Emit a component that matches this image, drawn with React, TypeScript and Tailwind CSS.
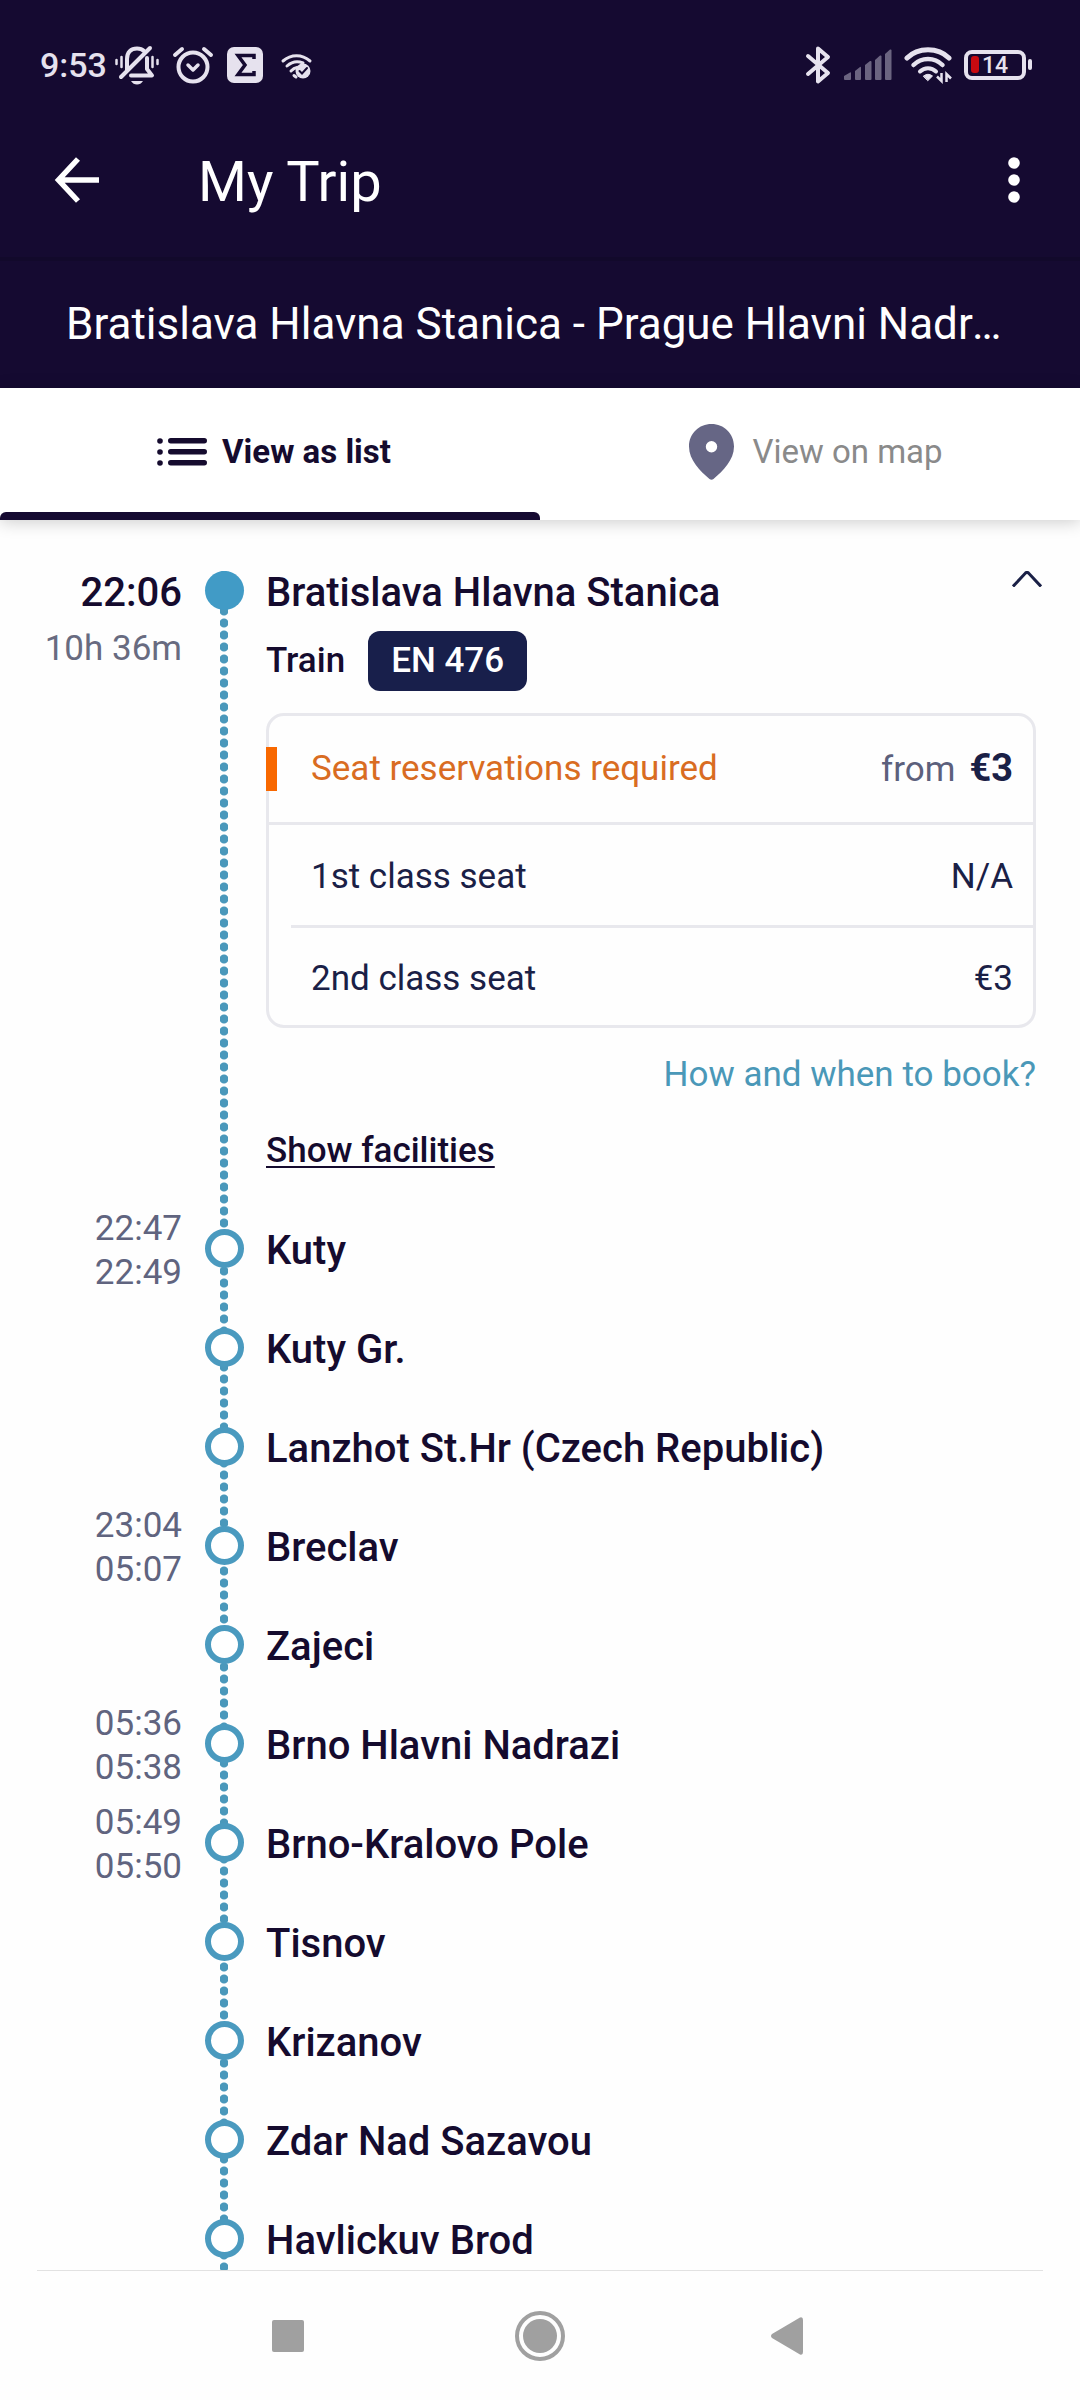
import clsx from "clsx";

type Stop = {
  name: string;
  arrival?: string;
  departure?: string;
};

const stops: Stop[] = [
  { name: "Kuty", arrival: "22:47", departure: "22:49" },
  { name: "Kuty Gr." },
  { name: "Lanzhot St.Hr (Czech Republic)" },
  { name: "Breclav", arrival: "23:04", departure: "05:07" },
  { name: "Zajeci" },
  { name: "Brno Hlavni Nadrazi", arrival: "05:36", departure: "05:38" },
  { name: "Brno-Kralovo Pole", arrival: "05:49", departure: "05:50" },
  { name: "Tisnov" },
  { name: "Krizanov" },
  { name: "Zdar Nad Sazavou" },
  { name: "Havlickuv Brod" },
];

const seats = [
  { label: "1st class seat", price: "N/A" },
  { label: "2nd class seat", price: "€3" },
];

const StatusBar = () => (
  <div className="flex h-[103px] items-end justify-between pr-[46px] pb-[18px] pl-10 text-[#e6e2ee]">
    <div className="flex h-10 items-center">
      <span className="text-[34px] leading-10 font-medium">9:53</span>
      <svg className="ml-2 h-10 w-11" viewBox="0 0 44 40" fill="none" stroke="currentColor" strokeLinecap="round">
        <path d="M12 25V14C12 7 16 3.500 22 3.500C25 3.500 27.500 4.500 29 6" strokeWidth="4" />
        <path d="M32 13V24L37 30.500H16" strokeWidth="4" strokeLinejoin="round" />
        <path d="M6 32L35 3" strokeWidth="4" />
        <path d="M16 36H28C26.500 38.500 24.500 39.500 22 39.500S17.500 38.500 16 36Z" fill="currentColor" stroke="none" />
        <path d="M1.500 15V19M6.500 12V22M37.500 12V22M42.500 15V19" strokeWidth="2.500" />
      </svg>
      <svg className="ml-3 h-10 w-11" viewBox="0 0 44 40" fill="none" stroke="currentColor" strokeLinecap="round">
        <circle cx="22" cy="22" r="14.500" strokeWidth="4" />
        <path d="M4 10L11 4M40 10L33 4" strokeWidth="4" />
        <path d="M17 20L22 25L27 20" strokeWidth="3.500" strokeLinejoin="round" />
      </svg>
      <svg className="ml-3 h-10 w-9" viewBox="0 0 36 40">
        <rect x="0" y="2" width="36" height="36" rx="7" fill="currentColor" />
        <path d="M27 14V10.500H11L18 20L11 29.500H27V26" fill="none" stroke="#150a31" strokeWidth="3.500" />
      </svg>
      <svg className="ml-4 h-10 w-9" viewBox="0 0 36 40" fill="none" stroke="currentColor" strokeLinecap="round">
        <path d="M4 16C12 9 23 9 31 16" strokeWidth="3" />
        <path d="M8 21C13 16.500 19 16 24 18" strokeWidth="3" />
        <path d="M12 26C14 24 15.500 23 18 22.500" strokeWidth="3" />
        <path d="M15 30.500L17 32" strokeWidth="3" />
        <circle cx="24" cy="26" r="7.500" fill="currentColor" stroke="none" />
        <path d="M20.500 26L23 28.500L28 23" stroke="#150a31" strokeWidth="2" />
      </svg>
    </div>
    <div className="flex h-10 items-center">
      <svg className="h-10 w-7" viewBox="0 0 28 40" fill="none" stroke="currentColor" strokeWidth="4" strokeLinecap="round" strokeLinejoin="round">
        <path d="M4 11L24 28L14 36.500V3.500L24 12L4 29" />
      </svg>
      <svg className="ml-3 h-10 w-12 text-[#6b6480]" viewBox="0 0 48 40" fill="currentColor">
        <path d="M0 31L6 27.500Q7 27 7 28V34Q7 35 6 35H1Q0 35 0 34Z" />
        <path d="M11 26L16 22Q17 21.500 17 22.500V34Q17 35 16 35H12Q11 35 11 34Z" />
        <path d="M21 20L26 16Q27.500 15.500 27.500 17V34Q27.500 35 26.500 35H22Q21 35 21 34Z" />
        <path d="M31 15L36 10.500Q37.500 10 37.500 11.500V34Q37.500 35 36.500 35H32Q31 35 31 34Z" />
        <path d="M41 9L46 4.500Q47.500 4 47.500 5.500V34Q47.500 35 46.500 35H42Q41 35 41 34Z" />
      </svg>
      <svg className="ml-3 h-10 w-12" viewBox="0 0 48 40" fill="none" stroke="currentColor" strokeLinecap="round">
        <path d="M3 13C14 2 34 2 45 13" strokeWidth="5" />
        <path d="M9.500 20C17.500 12 30.500 12 38.500 20" strokeWidth="4.500" />
        <path d="M16 26.500C20.500 22 27.500 22 32 26.500" strokeWidth="4" />
        <path d="M19.500 31Q24 27.500 28.500 31L24 35.500Z" fill="currentColor" strokeWidth="1" strokeLinejoin="round" />
        <path d="M37.500 28V36L33 31.500M42.500 37V29L47 33.500" strokeWidth="2.500" strokeLinecap="butt" />
      </svg>
      <svg className="ml-3 h-10 w-[70px]" viewBox="0 0 70 40" fontFamily="Roboto, sans-serif">
        <rect x="2" y="7" width="58" height="26" rx="6" fill="none" stroke="currentColor" strokeWidth="4" />
        <rect x="7" y="11" width="8" height="17" rx="3" fill="#c80a10" />
        <rect x="64" y="14" width="4" height="11" rx="2" fill="currentColor" />
        <text x="18" y="27.500" fontSize="23" fontWeight="500" fill="currentColor">14</text>
      </svg>
    </div>
  </div>
);

const Header = () => (
  <header className="shrink-0 bg-[#150a31] text-white">
    <StatusBar />
    <div className="flex h-[154px] items-center pr-11 pl-[54px]">
      <button type="button" aria-label="Back">
        <svg className="h-[46px] w-[46px]" viewBox="0 0 46 46" fill="none" stroke="currentColor" strokeWidth="5.500">
          <path d="M45 23H5M24 2L4.500 23L24 44" />
        </svg>
      </button>
      <h1 className="ml-[98px] pt-1 text-[56px] leading-[64px]">My Trip</h1>
      <button type="button" aria-label="More options" className="ml-auto px-4">
        <svg className="h-[46px] w-3" viewBox="0 0 12 46" fill="currentColor">
          <circle cx="6" cy="6" r="5.800" />
          <circle cx="6" cy="23" r="5.800" />
          <circle cx="6" cy="40" r="5.800" />
        </svg>
      </button>
    </div>
    <h2 className="h-[131px] truncate border-t-4 border-[#12092b] px-[66px] text-[44px] leading-[126px]">
      Bratislava Hlavna Stanica - Prague Hlavni Nadrazi
    </h2>
  </header>
);

const Tabs = () => (
  <div
    role="tablist"
    className="relative grid shrink-0 grid-cols-2 bg-white text-[33px] shadow-[0_2px_16px_rgba(0,0,0,0.2)]"
  >
    <button
      type="button"
      role="tab"
      aria-selected="true"
      className="flex flex-col items-center font-bold text-[#150b2e]"
    >
      <span className="flex h-[124px] items-center gap-[15px] pt-1 pl-2">
        <svg className="h-7 w-[50px]" viewBox="0 0 50 28" fill="currentColor">
          <circle cx="3" cy="3" r="2.800" />
          <circle cx="3" cy="14" r="2.800" />
          <circle cx="3" cy="25" r="2.800" />
          <rect x="11" y="0" width="39" height="5.500" rx="2.750" />
          <rect x="11" y="11" width="39" height="5.500" rx="2.750" />
          <rect x="11" y="22" width="39" height="5.500" rx="2.750" />
        </svg>
        View as list
      </span>
      <span className="h-2 w-full rounded-t-md bg-[#150a31]" />
    </button>
    <button
      type="button"
      role="tab"
      aria-selected="false"
      className="flex h-[124px] items-center justify-center gap-[18px] pt-1 pl-3 text-[#8a8a8a]"
    >
      <svg className="h-14 w-[45px] text-[#666685]" viewBox="0 0 45 56" fill="currentColor" fillRule="evenodd">
        <path d="M22.500 0C10 0 0 9.500 0 22.500C0 36 11 47 20.500 55Q22.500 56.500 24.500 55C34 47 45 36 45 22.500C45 9.500 35 0 22.500 0ZM22.500 17A5.700 5.700 0 1 1 22.500 28.400A5.700 5.700 0 1 1 22.500 17Z" />
      </svg>
      View on map
    </button>
  </div>
);

const SeatCard = () => (
  <dl className="mt-[22px] rounded-[18px] border-3 border-[#e8e8ed] text-[#1a2046]">
    <div className="flex h-[109px] items-center justify-between border-b-3 border-[#e8e8ed] pr-5">
      <dt className="flex items-center text-[#d96c22]">
        <span className="-ml-[3px] h-11 w-[11px] bg-[#f86800]" />
        <span className="ml-[34px]">Seat reservations required</span>
      </dt>
      <dd className="flex items-baseline gap-3.5 text-[#5c607c]">
        from
        <span className="text-[38px] font-bold text-[#1a2046]">€3</span>
      </dd>
    </div>
    {seats.map((seat, index) => (
      <div
        key={seat.label}
        className={clsx(
          "ml-[22px] flex h-[100px] items-center justify-between pt-1 pr-5 pl-5",
          index > 0 && "border-t-3 border-[#e8e8ed]",
        )}
      >
        <dt>{seat.label}</dt>
        <dd>{seat.price}</dd>
      </div>
    ))}
  </dl>
);

const Departure = () => (
  <li className="grid grid-cols-[182px_84px_1fr] pb-7">
    <div className="text-right">
      <p className="text-[40px] leading-11 font-medium">22:06</p>
      <p className="mt-3 text-[#686b80]">10h 36m</p>
    </div>
    <span className="size-[39px] justify-self-center rounded-full bg-[#419bc6]" />
    <div className="pr-11">
      <div className="flex items-start justify-between">
        <h3 className="text-[40px] leading-11 font-medium">Bratislava Hlavna Stanica</h3>
        <button type="button" aria-label="Collapse" className="-mr-1.5">
          <svg className="h-4 w-[30px]" viewBox="0 0 30 16" fill="none" stroke="#1a2046" strokeWidth="3">
            <path d="M1 15.500L13.500 2Q15 0.800 16.500 2L29 15.500" />
          </svg>
        </button>
      </div>
      <div className="mt-4 flex items-center gap-[23px] font-medium">
        Train
        <span className="rounded-xl bg-[#181f4b] px-[23px] py-2 text-white">EN 476</span>
      </div>
      <SeatCard />
      <p className="mt-[25px] text-right">
        <a href="#booking" className="text-[#4a98b8]">
          How and when to book?
        </a>
      </p>
      <button
        type="button"
        className="mt-8 block font-medium underline decoration-2 underline-offset-4"
      >
        Show facilities
      </button>
    </div>
  </li>
);

const StopItem = ({ name, arrival, departure }: Stop) => (
  <li className="grid h-[99px] grid-cols-[182px_84px_1fr] items-center">
    <div className="text-right text-[#60647f]">
      {arrival && <p>{arrival}</p>}
      {departure && <p>{departure}</p>}
    </div>
    <span className="mb-1 size-[39px] justify-self-center rounded-full border-6 border-[#4a9abf] bg-white" />
    <h3 className="text-[40px] leading-11 font-medium">{name}</h3>
  </li>
);

const NavigationBar = () => (
  <nav className="shrink-0 px-[37px] text-[#a0a0a0]">
    <div className="grid h-[130px] grid-cols-[1fr_50px_1fr] items-center border-t border-[#e2e2e2]">
      <button type="button" aria-label="Recent apps" className="mr-[211px] justify-self-end">
        <svg className="size-8" viewBox="0 0 32 32" fill="currentColor">
          <rect width="32" height="32" rx="2" />
        </svg>
      </button>
      <button type="button" aria-label="Home">
        <svg className="size-[50px]" viewBox="0 0 50 50" fill="currentColor">
          <circle cx="25" cy="25" r="23" fill="none" stroke="currentColor" strokeWidth="4" />
          <circle cx="25" cy="25" r="17" />
        </svg>
      </button>
      <button type="button" aria-label="Back" className="ml-[206px] justify-self-start">
        <svg className="h-[38px] w-8" viewBox="0 0 32 38" fill="currentColor">
          <path d="M29 0.500Q32 -0.500 32 3V35Q32 38.500 29 37.500L1 21Q-1 19 1 17Z" />
        </svg>
      </button>
    </div>
  </nav>
);

const App = () => (
  <div className="flex h-screen flex-col bg-[#fefefe] font-[Roboto,sans-serif] text-[#150b2e]">
    <Header />
    <Tabs />
    <main className="flex flex-1 flex-col overflow-y-auto pt-[51px] [scrollbar-width:none]">
      {/* the dotted rail runs behind every stop marker */}
      <ol className="flex-1 bg-[radial-gradient(circle,#4a98bb_4px,transparent_5px)] bg-[length:8px_12px] bg-[position:220px_-2px] bg-repeat-y text-[35px] leading-11">
        <Departure />
        {stops.map((stop) => (
          <StopItem key={stop.name} {...stop} />
        ))}
      </ol>
    </main>
    <NavigationBar />
  </div>
);

export default App;
